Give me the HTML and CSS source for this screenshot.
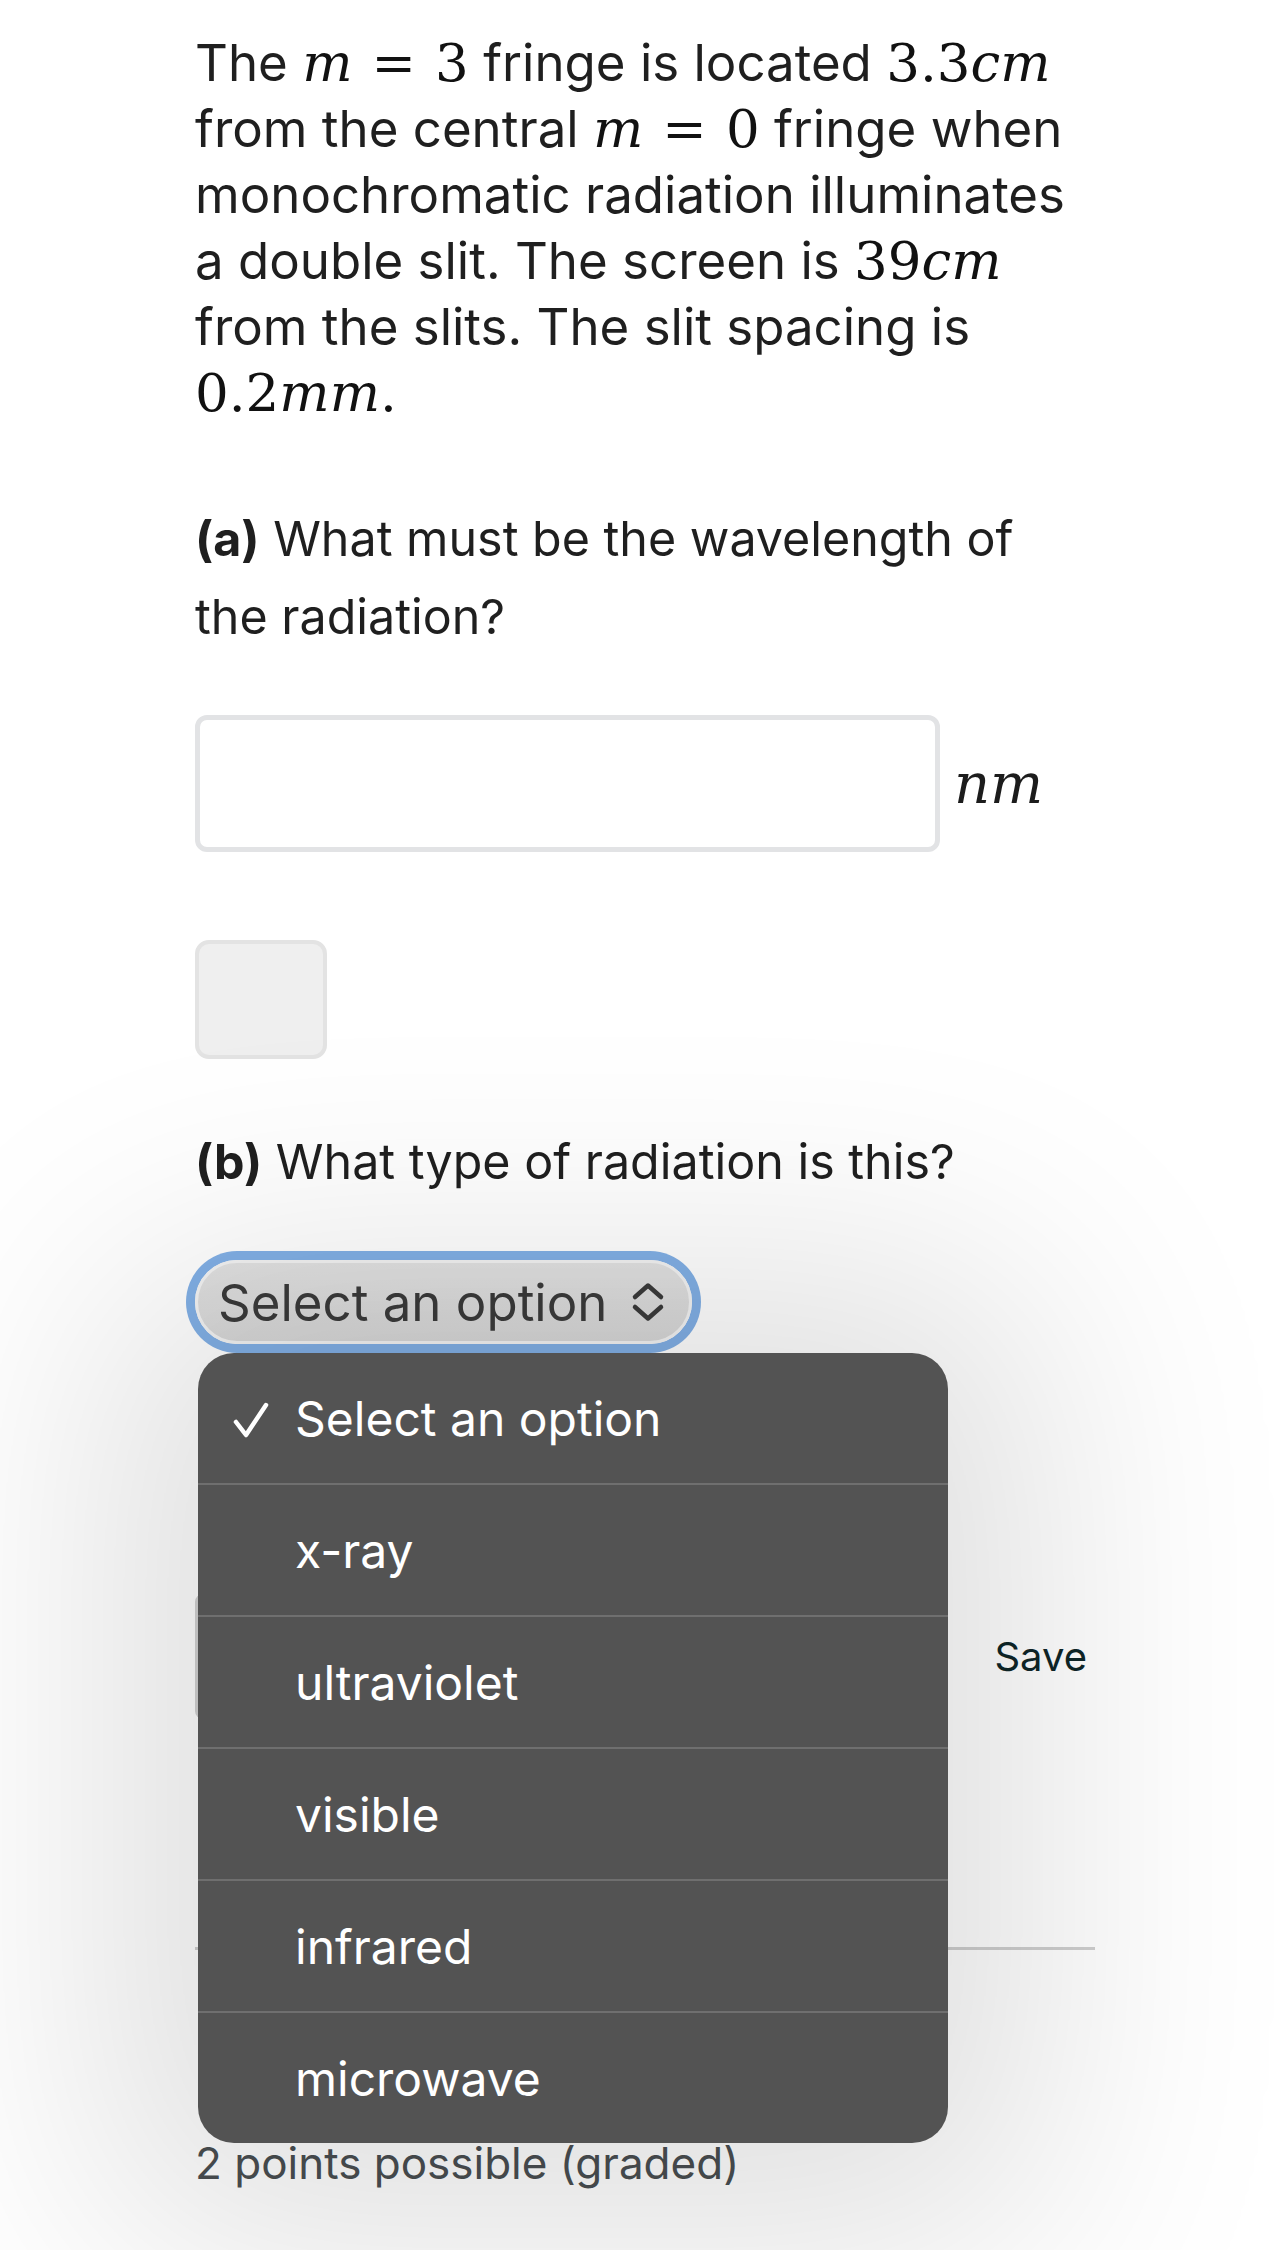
FILE: index.html
```html
<!DOCTYPE html>
<html lang="en">
<head>
<meta charset="utf-8">
<title>Double slit problem</title>
<link rel="stylesheet" href="styles.css">
</head>
<body>
<main class="page">
  <p class="problem">The <span class="math"><i>m</i><span class="rel">=</span>3</span> fringe is located <span class="math">3.3<i>cm</i></span><br>from the central <span class="math"><i>m</i><span class="rel">=</span>0</span> fringe when<br>monochromatic radiation illuminates<br>a double slit. The screen is <span class="math">39<i>cm</i></span><br>from the slits. The slit spacing is<br><span class="math">0.2<i>mm</i>.</span></p>

  <section class="part">
    <p class="question"><b>(a)</b> What must be the wavelength of<br>the radiation?</p>
    <div class="answer-row">
      <div class="text-input"></div>
      <span class="math unit"><i>nm</i></span>
    </div>
    <div class="status-box"></div>
  </section>

  <section class="part part-b">
    <p class="question"><b>(b)</b> What type of radiation is this?</p>
    <div class="select-wrap">
      <div class="select">
        <span class="select-label">Select an option</span>
        <svg class="chevrons" width="34" height="40" viewBox="0 0 34 40" aria-hidden="true">
          <path d="M4 15 L17 3.5 L30 15" fill="none" stroke="#3b3b3b" stroke-width="4.5" stroke-linecap="round" stroke-linejoin="round"/>
          <path d="M4 25 L17 36.5 L30 25" fill="none" stroke="#3b3b3b" stroke-width="4.5" stroke-linecap="round" stroke-linejoin="round"/>
        </svg>
      </div>
      <ul class="menu">
        <li class="menu-item selected">
          <svg class="check" width="36" height="36" viewBox="0 0 36 36" aria-hidden="true">
            <path d="M3 20 L13 33 L33 3" fill="none" stroke="#ffffff" stroke-width="4.5" stroke-linecap="round" stroke-linejoin="round"/>
          </svg>
          <span>Select an option</span>
        </li>
        <li class="menu-item"><span>x-ray</span></li>
        <li class="menu-item"><span>ultraviolet</span></li>
        <li class="menu-item"><span>visible</span></li>
        <li class="menu-item"><span>infrared</span></li>
        <li class="menu-item"><span>microwave</span></li>
      </ul>
    </div>
  </section>

  <div class="actions">
    <div class="submit-box"></div>
    <span class="save">Save</span>
  </div>
  <hr class="divider">
  <p class="points">2 points possible (graded)</p>
</main>
</body>
</html>
```

FILE: styles.css
```css
html, body {
  margin: 0;
  padding: 0;
  background: #ffffff;
}

body {
  font-family: Inter, "Noto Sans", "Liberation Sans", sans-serif;
  color: #222222;
  overflow: hidden;
  height: 2250px;
}

.page {
  width: 903px;
  padding: 30px 0 0 195px;
}

.problem {
  margin: 0;
  font-size: 51px;
  line-height: 66px;
  color: #1f1f1f;
  white-space: nowrap;
}

.math {
  font-family: "DejaVu Serif", "Liberation Serif", serif;
  font-size: 1.04em;
  line-height: 1;
  color: #111111;
}

.math i {
  font-style: italic;
}

.rel {
  padding: 0 0.36em;
}

.part {
  margin-top: 74px;
}

.question {
  margin: 0;
  font-size: 48.4px;
  line-height: 78px;
  color: #1f1f1f;
  white-space: nowrap;
}

.question b {
  font-weight: 700;
}

.answer-row {
  display: flex;
  align-items: center;
  margin-top: 59px;
}

.text-input {
  width: 735px;
  height: 127px;
  border: 5px solid #e2e3e5;
  border-radius: 12px;
  background: #ffffff;
}

.unit {
  font-size: 56px;
  margin-left: 14px;
  color: #1c1c1c;
}

.status-box {
  margin-top: 88px;
  width: 124px;
  height: 111px;
  border: 4px solid #e3e3e3;
  border-radius: 14px;
  background: #efefef;
}

.part-b {
  margin-top: 64px;
}

.select-wrap {
  position: relative;
  margin-top: 59px;
  width: 497px;
}

.select {
  box-sizing: border-box;
  height: 84px;
  width: 497px;
  display: flex;
  align-items: center;
  justify-content: space-between;
  padding: 0 24px 0 20px;
  border: 3px solid #f3f3f3;
  border-radius: 42px;
  background: linear-gradient(#e2e2e2, #d8d8d8);
  box-shadow: 0 0 0 9px #82b0e6;
  font-size: 51px;
  color: #3b3b3b;
}

.select-label {
  white-space: nowrap;
}

.chevrons {
  flex: none;
}

.menu {
  position: absolute;
  left: 3px;
  top: 93px;
  width: 750px;
  margin: 0;
  padding: 0;
  list-style: none;
  background: #535353;
  border-radius: 36px;
  overflow: hidden;
  box-shadow: 0 10px 500px 100px rgba(0, 0, 0, 0.12);
  z-index: 5;
}

.menu-item {
  position: relative;
  height: 130px;
  display: flex;
  align-items: center;
  padding-left: 97px;
  font-size: 48px;
  color: #ffffff;
}

.menu-item + .menu-item {
  border-top: 2px solid #6f6f6f;
}

.check {
  position: absolute;
  left: 35px;
  top: 49px;
}

.actions {
  display: flex;
  align-items: center;
  justify-content: space-between;
  margin-top: 250px;
}

.submit-box {
  width: 400px;
  height: 117px;
  border: 4px solid #d2d2d2;
  border-radius: 8px;
  background: #e8e8e8;
}

.save {
  font-size: 40px;
  color: #0e2628;
  padding: 0 11px;
}

.divider {
  margin: 228px 0 0 0;
  width: 900px;
  border: 0;
  height: 3px;
  background: #cfcfcf;
}

.points {
  margin: 186px 0 0 0;
  font-size: 44px;
  color: #4a4f52;
}
```
